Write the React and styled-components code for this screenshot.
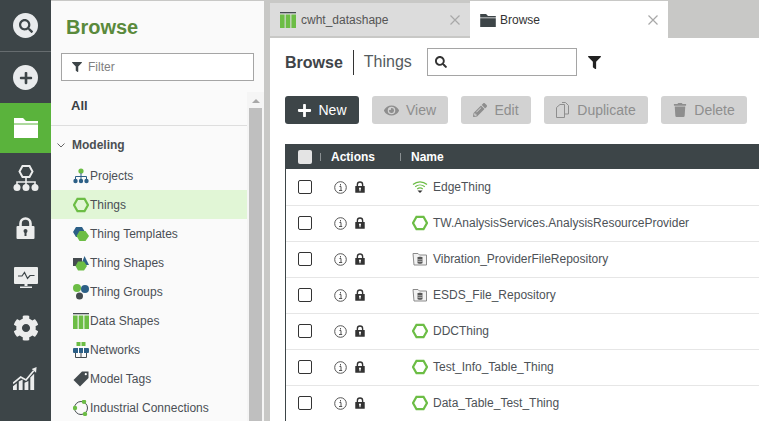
import React from 'react';
import styled, { createGlobalStyle } from 'styled-components';
import { FaSearch, FaPlus, FaCog, FaFilter, FaEye, FaPencilAlt, FaTrash } from 'react-icons/fa';

const GREEN = '#6cbd45';
const BLUE = '#2c5f86';
const DARK = '#3d4548';

const Global = createGlobalStyle`
  html, body { margin: 0; padding: 0; overflow: hidden; }
  body { font-family: "Liberation Sans", Arial, sans-serif; background: #c8c8c6; }
  * { box-sizing: border-box; }
`;

const HexOutline = ({ size = 16 }) => (
  <svg width={size} height={size} viewBox="0 0 16 16">
    <path d="M4.500 1.800h7L15 8l-3.500 6.200h-7L1 8z" fill="none" stroke={GREEN} strokeWidth="2.300" />
  </svg>
);

const FolderIcon = ({ width, height, color }) => (
  <svg width={width} height={height} viewBox="0 0 24 20" fill={color}>
    <path d="M0 0h9l3 3h12v2.500H0z" />
    <path d="M0 6.500h24V20H0z" />
  </svg>
);

const LockIcon = ({ width, height, color, hole }) => (
  <svg width={width} height={height} viewBox="0 0 19 22">
    <path d="M4.500 10V6.500a5 5 0 0 1 10 0V10" fill="none" stroke={color} strokeWidth="2.600" />
    <rect x="0.500" y="9" width="18" height="13" rx="1" fill={color} />
    <circle cx="9.500" cy="14" r="2" fill={hole} />
    <rect x="8.500" y="14" width="2" height="5" fill={hole} />
  </svg>
);

const CloseIcon = () => (
  <svg width="10" height="10" viewBox="0 0 10 10">
    <path d="M.5.500l9 9M9.500.500l-9 9" stroke="#a8a8a8" strokeWidth="1.200" fill="none" />
  </svg>
);

const ProjectsIcon = () => (
  <svg width="16" height="16" viewBox="0 0 16 16">
    <circle cx="8" cy="3" r="2.600" fill={GREEN} />
    <path d="M8 5v4M2.500 12V8.500h11V12M8 9v3" stroke={BLUE} strokeWidth="1" fill="none" />
    <circle cx="2.500" cy="13" r="2.200" fill={BLUE} />
    <circle cx="8" cy="13" r="2.200" fill={BLUE} />
    <circle cx="13.500" cy="13" r="2.200" fill={BLUE} />
  </svg>
);

const TemplatesIcon = () => (
  <svg width="16" height="16" viewBox="0 0 16 16">
    <path d="M3 1h6l3 5-3 5H3L0 6z" fill={BLUE} />
    <path d="M6.500 5h6L16 10l-3.500 5h-6L3.500 10z" fill={GREEN} />
  </svg>
);

const ShapesIcon = () => (
  <svg width="16" height="16" viewBox="0 0 16 16">
    <rect x="0" y="3" width="9" height="8" fill="#444b4f" />
    <path d="M11.500 1L16 10H8z" fill={BLUE} />
    <path d="M5 6.500h6L14 11l-3 4.500H5L2.500 11z" fill={GREEN} />
  </svg>
);

const GroupsIcon = () => (
  <svg width="16" height="16" viewBox="0 0 16 16">
    <circle cx="4" cy="4" r="4" fill={GREEN} />
    <circle cx="12" cy="5" r="4" fill={BLUE} />
    <circle cx="6.500" cy="12" r="3.500" fill="#444b4f" />
  </svg>
);

const DataShapeIcon = () => (
  <svg width="16" height="16" viewBox="0 0 16 16">
    <rect x="0" y="0" width="16" height="1.300" fill="#444b4f" />
    <rect x="0" y="2.500" width="4.600" height="13.500" fill={GREEN} />
    <rect x="5.700" y="2.500" width="4.600" height="13.500" fill={GREEN} />
    <rect x="11.400" y="2.500" width="4.600" height="13.500" fill={GREEN} />
  </svg>
);

const NetworksIcon = () => (
  <svg width="16" height="16" viewBox="0 0 16 16">
    <rect x="3.500" y="0" width="4" height="4" fill={GREEN} />
    <rect x="8.500" y="0" width="4" height="4" fill={GREEN} />
    <rect x="0" y="6" width="16" height="5" rx="1" fill={BLUE} />
    <path d="M5.500 4v8M10.500 4v8" stroke="#fff" strokeWidth="1" />
    <path d="M2.500 11v4.500h11V11M8 11v4.500" stroke="#444b4f" strokeWidth="1" fill="none" />
  </svg>
);

const TagIcon = () => (
  <svg width="16" height="16" viewBox="0 0 16 16">
    <path d="M9 .5h6.500V7L7 15.500.5 9z" fill="#444b4f" />
    <circle cx="12.800" cy="3.200" r="1.100" fill="#fff" />
  </svg>
);

const ConnectionIcon = () => (
  <svg width="16" height="16" viewBox="0 0 16 16">
    <circle cx="8" cy="8" r="6.500" fill="none" stroke="#444b4f" strokeWidth="1" />
    <circle cx="2" cy="8" r="2.200" fill={GREEN} />
    <circle cx="11" cy="1.800" r="2.200" fill={GREEN} />
    <circle cx="12" cy="14" r="2.200" fill={GREEN} />
  </svg>
);

const WifiIcon = () => (
  <svg width="16" height="14" viewBox="0 0 16 14">
    <g fill="none" stroke={GREEN} strokeWidth="1.200">
      <path d="M1 4.500c4-3.600 10-3.600 14 0" />
      <path d="M3.200 6.800c2.800-2.400 6.800-2.400 9.600 0" />
      <path d="M5.200 9c1.600-1.300 4-1.300 5.600 0" />
    </g>
    <path d="M5.500 10.500h5L8 13z" fill="#333" />
  </svg>
);

const RepoIcon = () => (
  <svg width="16" height="14" viewBox="0 0 16 14">
    <path d="M1 1.500h5l1.500 1.500h7v10H2z" fill="#f2f2f2" stroke="#8b8b8b" strokeWidth="1" />
    <path d="M5.500 5.500c0-1 5-1 5 0v5.500c0 1-5 1-5 0z" fill="#555" />
    <path d="M5.500 7.300c1 .7 4 .7 5 0M5.500 9.100c1 .7 4 .7 5 0" stroke="#f2f2f2" strokeWidth=".6" fill="none" />
  </svg>
);

const HierarchyIcon = () => (
  <svg width="26" height="28" viewBox="0 0 26 28">
    <path d="M9.500 2h7l3 5.500-3 5.500h-7l-3-5.500z" fill="none" stroke="#eceded" strokeWidth="2" />
    <path d="M13 13v4M4 23v-5h18v5M13 17v6" fill="none" stroke="#eceded" strokeWidth="1.600" />
    <circle cx="4" cy="23.500" r="3.500" fill="#eceded" />
    <circle cx="13" cy="23.500" r="3.500" fill="#eceded" />
    <circle cx="22" cy="23.500" r="3.500" fill="#eceded" />
  </svg>
);

const MonitorIcon = () => (
  <svg width="24" height="22" viewBox="0 0 24 22">
    <rect x="0" y="0" width="24" height="17" rx="1" fill="#eceded" />
    <path d="M4 9h4l2.500-3.500 3 6 2.500-3h4.500" fill="none" stroke={DARK} strokeWidth="1.200" />
    <path d="M10.500 17h3v2h-3zM6 19.500h12V21H6z" fill="#eceded" />
  </svg>
);

const ChartIcon = () => (
  <svg width="25" height="25" viewBox="0 0 26 26">
    <path d="M0 18L8 11.500l5.500 3L21.500 5" fill="none" stroke="#eceded" strokeWidth="1.800" />
    <path d="M19.500 3l5-2-.5 6z" fill="#eceded" />
    <path d="M0 25v-4l4-3v7zM6 25V16l4-2v11zM12 25V17.500l4-2V25zM18 25V12l4-4v17z" fill="#eceded" />
  </svg>
);

const CopyIcon = () => (
  <svg width="14" height="16" viewBox="0 0 14 16">
    <path d="M.5 5.500L4 2.500h4.500v13H.5z" fill="none" stroke="#8e8e8e" strokeWidth="1" />
    <path d="M6 .5h3.500l3 3V12H9" fill="none" stroke="#8e8e8e" strokeWidth="1" />
  </svg>
);

const InfoIcon = () => (
  <svg width="13" height="13" viewBox="0 0 13 13">
    <circle cx="6.500" cy="6.500" r="5.800" fill="none" stroke="#555" strokeWidth="1" />
    <path d="M5.500 5.500h1.500v4M5 9.500h3.200M6.500 3v1.500" fill="none" stroke="#555" strokeWidth="1" />
  </svg>
);

const navItems = [
  { label: 'Projects', icon: <ProjectsIcon /> },
  { label: 'Things', icon: <HexOutline />, active: true },
  { label: 'Thing Templates', icon: <TemplatesIcon /> },
  { label: 'Thing Shapes', icon: <ShapesIcon /> },
  { label: 'Thing Groups', icon: <GroupsIcon /> },
  { label: 'Data Shapes', icon: <DataShapeIcon /> },
  { label: 'Networks', icon: <NetworksIcon /> },
  { label: 'Model Tags', icon: <TagIcon /> },
  { label: 'Industrial Connections', icon: <ConnectionIcon /> },
];

const rows = [
  { name: 'EdgeThing', icon: <WifiIcon /> },
  { name: 'TW.AnalysisServices.AnalysisResourceProvider', icon: <HexOutline /> },
  { name: 'Vibration_ProviderFileRepository', icon: <RepoIcon /> },
  { name: 'ESDS_File_Repository', icon: <RepoIcon /> },
  { name: 'DDCThing', icon: <HexOutline /> },
  { name: 'Test_Info_Table_Thing', icon: <HexOutline /> },
  { name: 'Data_Table_Test_Thing', icon: <HexOutline /> },
];

const App = () => (
  <>
    <Global />
    <Page>
      <Rail>
        <RailCell $h={51}><RoundBadge><FaSearch size={14} /></RoundBadge></RailCell>
        <RailCell $h={52} $split><RoundBadge><FaPlus size={14} /></RoundBadge></RailCell>
        <RailCell $h={50} $active><FolderIcon width={24} height={20} color="#fff" /></RailCell>
        <RailCell $h={50}><HierarchyIcon /></RailCell>
        <RailCell $h={50}><LockIcon width={19} height={22} color="#eceded" hole={DARK} /></RailCell>
        <RailCell $h={50}><MonitorIcon /></RailCell>
        <RailCell $h={50}><FaCog size={26} /></RailCell>
        <RailCell $h={50}><ChartIcon /></RailCell>
      </Rail>

      <Side>
        <SideTitle>Browse</SideTitle>
        <FilterBox><FaFilter size={10} color="#3d4548" /><span>Filter</span></FilterBox>
        <SideBody>
          <SideList>
            <AllRow>All</AllRow>
            <GroupRow>
              <svg width="8" height="5" viewBox="0 0 8 5"><path d="M.5.500L4 4l3.500-3.500" fill="none" stroke="#666" strokeWidth="1" /></svg>
              Modeling
            </GroupRow>
            {navItems.map((item) => (
              <NavRow key={item.label} $active={item.active}>
                <NavIcon>{item.icon}</NavIcon>
                {item.label}
              </NavRow>
            ))}
          </SideList>
          <ScrollBar>
            <ScrollArrow />
            <ScrollThumb />
          </ScrollBar>
        </SideBody>
      </Side>

      <Main>
        <Tabs>
          <Tab>
            <DataShapeIcon />
            <TabLabel>cwht_datashape</TabLabel>
            <CloseIcon />
          </Tab>
          <Tab $active>
            <FolderIcon width={16} height={13} color="#3d4548" />
            <TabLabel>Browse</TabLabel>
            <CloseIcon />
          </Tab>
        </Tabs>
        <Content>
          <Heading>
            <HeadingMain>Browse</HeadingMain>
            <HeadingSub>Things</HeadingSub>
            <SearchBox><FaSearch size={12} color="#333" /></SearchBox>
            <FaFilter size={13} color="#222" />
          </Heading>
          <Actions>
            <PrimaryButton><FaPlus size={15} />New</PrimaryButton>
            <GhostButton $w={76}><FaEye size={15} />View</GhostButton>
            <GhostButton $w={70}><FaPencilAlt size={14} />Edit</GhostButton>
            <GhostButton $w={104}><CopyIcon />Duplicate</GhostButton>
            <GhostButton $w={86}><FaTrash size={14} />Delete</GhostButton>
          </Actions>
          <Table>
            <HeadRow>
              <CheckCell $w={34}><Check $head /></CheckCell>
              <Tick />
              <ActionHead>Actions</ActionHead>
              <Tick />
              <NameHead>Name</NameHead>
            </HeadRow>
            {rows.map((row) => (
              <Row key={row.name}>
                <CheckCell $w={35}><Check /></CheckCell>
                <ActionCell>
                  <InfoIcon />
                  <LockIcon width={10} height={12} color="#333" hole="#fff" />
                </ActionCell>
                <NameCell>
                  <RowIcon>{row.icon}</RowIcon>
                  {row.name}
                </NameCell>
              </Row>
            ))}
          </Table>
        </Content>
      </Main>
    </Page>
  </>
);

const Page = styled.div`
  display: flex;
  width: 759px;
  height: 421px;
  overflow: hidden;
  background: #c8c8c6;
`;

const Rail = styled.nav`
  flex: 0 0 51px;
  display: flex;
  flex-direction: column;
  background: ${DARK};
  color: #eceded;
`;

const RailCell = styled.div`
  flex: 0 0 ${(p) => p.$h}px;
  display: flex;
  align-items: center;
  justify-content: center;
  background: ${(p) => (p.$active ? '#5ab33c' : 'transparent')};
  color: ${(p) => (p.$active ? '#fff' : '#eceded')};
  border-top: ${(p) => (p.$split ? '1px solid #666c6f' : 'none')};
`;

const RoundBadge = styled.div`
  width: 25px;
  height: 25px;
  border-radius: 50%;
  background: #e9ebed;
  color: ${DARK};
  display: flex;
  align-items: center;
  justify-content: center;
`;

const Side = styled.aside`
  flex: 0 0 213px;
  margin-top: 1px;
  display: flex;
  flex-direction: column;
  background: #fafafa;
`;

const SideTitle = styled.h1`
  margin: 14px 0 0 15px;
  height: 24px;
  font-size: 20px;
  line-height: 24px;
  font-weight: bold;
  color: #5a8a3c;
`;

const FilterBox = styled.div`
  margin: 14px 0 0 10px;
  width: 193px;
  height: 28px;
  display: flex;
  align-items: center;
  gap: 6px;
  padding-left: 10px;
  background: #fff;
  border: 1px solid #a5a5a5;
  font-size: 12px;
  color: #808080;
`;

const SideBody = styled.div`
  flex: 1;
  display: flex;
  min-height: 0;
  margin-top: 11px;
`;

const SideList = styled.div`
  flex: 1;
  min-width: 0;
`;

const AllRow = styled.div`
  height: 34px;
  padding: 6px 0 0 20px;
  line-height: 16px;
  font-size: 13px;
  font-weight: bold;
  color: #3a3f44;
  border-bottom: 1px solid #dedede;
`;

const GroupRow = styled.div`
  height: 35px;
  display: flex;
  align-items: center;
  gap: 7px;
  padding: 3px 0 0 6px;
  font-size: 12px;
  font-weight: bold;
  color: #4b4f52;
`;

const NavRow = styled.div`
  height: 29px;
  display: flex;
  align-items: center;
  padding-left: 22px;
  font-size: 12px;
  color: #4a4f55;
  background: ${(p) => (p.$active ? '#e1f6d6' : 'transparent')};
`;

const NavIcon = styled.span`
  width: 17px;
  display: flex;
  align-items: center;
`;

const ScrollBar = styled.div`
  flex: 0 0 16px;
  background: #f5f5f5;
  padding: 0 2px;
  display: flex;
  flex-direction: column;
  align-items: center;
`;

const ScrollArrow = styled.div`
  margin-top: 7px;
  width: 0;
  height: 0;
  border-left: 4px solid transparent;
  border-right: 4px solid transparent;
  border-bottom: 4px solid #a8a8a8;
`;

const ScrollThumb = styled.div`
  margin-top: 5px;
  width: 13px;
  flex: 1;
  background: #bfbfbf;
`;

const Main = styled.main`
  flex: 0 0 489px;
  margin-left: 6px;
  display: flex;
  flex-direction: column;
  min-width: 0;
`;

const Tabs = styled.div`
  flex: 0 0 38px;
  display: flex;
  align-items: flex-end;
`;

const Tab = styled.div`
  width: ${(p) => (p.$active ? '198px' : '200px')};
  height: ${(p) => (p.$active ? '37px' : '33px')};
  margin-bottom: ${(p) => (p.$active ? '0' : '2px')};
  display: flex;
  align-items: center;
  gap: ${(p) => (p.$active ? '4px' : '5px')};
  padding: ${(p) => (p.$active ? '1px 10px 0' : '0 10px')};
  background: ${(p) => (p.$active ? '#fff' : '#dcdcdc')};
  color: ${(p) => (p.$active ? '#333' : '#555')};
  font-size: 12px;
`;

const TabLabel = styled.span`
  flex: 1;
`;

const Content = styled.div`
  flex: 1;
  background: #fff;
  padding: 0 0 0 15px;
  min-height: 0;
`;

const Heading = styled.div`
  height: 48px;
  display: flex;
  align-items: center;
`;

const HeadingMain = styled.span`
  font-size: 16px;
  font-weight: bold;
  color: #3f4448;
  padding-right: 10px;
  border-right: 1px solid #333;
  line-height: 25px;
`;

const HeadingSub = styled.span`
  font-size: 16px;
  color: #555b60;
  margin-left: 10px;
`;

const SearchBox = styled.div`
  margin: 0 11px 0 15px;
  width: 150px;
  height: 28px;
  display: flex;
  align-items: center;
  padding-left: 7px;
  border: 1px solid #a5a5a5;
`;

const Actions = styled.div`
  margin-top: 10px;
  height: 28px;
  display: flex;
  gap: 13px;
`;

const PrimaryButton = styled.button`
  width: 74px;
  height: 28px;
  display: flex;
  align-items: center;
  justify-content: center;
  gap: 6px;
  padding: 0;
  border: 0;
  border-radius: 3px;
  background: ${DARK};
  color: #fff;
  font: 14px "Liberation Sans", Arial, sans-serif;
`;

const GhostButton = styled.button`
  width: ${(p) => p.$w}px;
  height: 28px;
  display: flex;
  align-items: center;
  justify-content: center;
  gap: 7px;
  padding: 0;
  border: 0;
  border-radius: 3px;
  background: #d2d2d2;
  color: #8e8e8e;
  font: 14px "Liberation Sans", Arial, sans-serif;
`;

const Table = styled.div`
  margin-top: 20px;
  border-left: 1px solid ${DARK};
`;

const HeadRow = styled.div`
  height: 25px;
  margin-bottom: 1px;
  display: flex;
  align-items: center;
  background: ${DARK};
  color: #fff;
  font-size: 12px;
  font-weight: bold;
`;

const Tick = styled.span`
  flex: 0 0 1px;
  height: 8px;
  background: #8a9092;
`;

const ActionHead = styled.span`
  flex: 0 0 79px;
  padding-left: 10px;
`;

const NameHead = styled.span`
  flex: 1;
  padding-left: 10px;
`;

const Row = styled.div`
  height: 36px;
  padding-bottom: 1px;
  display: flex;
  align-items: center;
  border-bottom: 1px solid #e6e6e6;
  font-size: 12px;
  color: #4d5257;
`;

const CheckCell = styled.div`
  flex: 0 0 ${(p) => p.$w}px;
  display: flex;
  padding-left: 12px;
`;

const ActionCell = styled.div`
  flex: 0 0 91px;
  display: flex;
  align-items: center;
  gap: 8px;
  padding-left: 13px;
`;

const NameCell = styled.div`
  flex: 1;
  display: flex;
  align-items: center;
  white-space: nowrap;
`;

const RowIcon = styled.span`
  flex: 0 0 21px;
  display: flex;
  align-items: center;
`;

const Check = styled.span`
  width: 14px;
  height: 14px;
  border: ${(p) => (p.$head ? '0' : '1.5px solid #333')};
  border-radius: 2px;
  background: ${(p) => (p.$head ? '#e4e4e4' : '#fff')};
`;

export default App;
